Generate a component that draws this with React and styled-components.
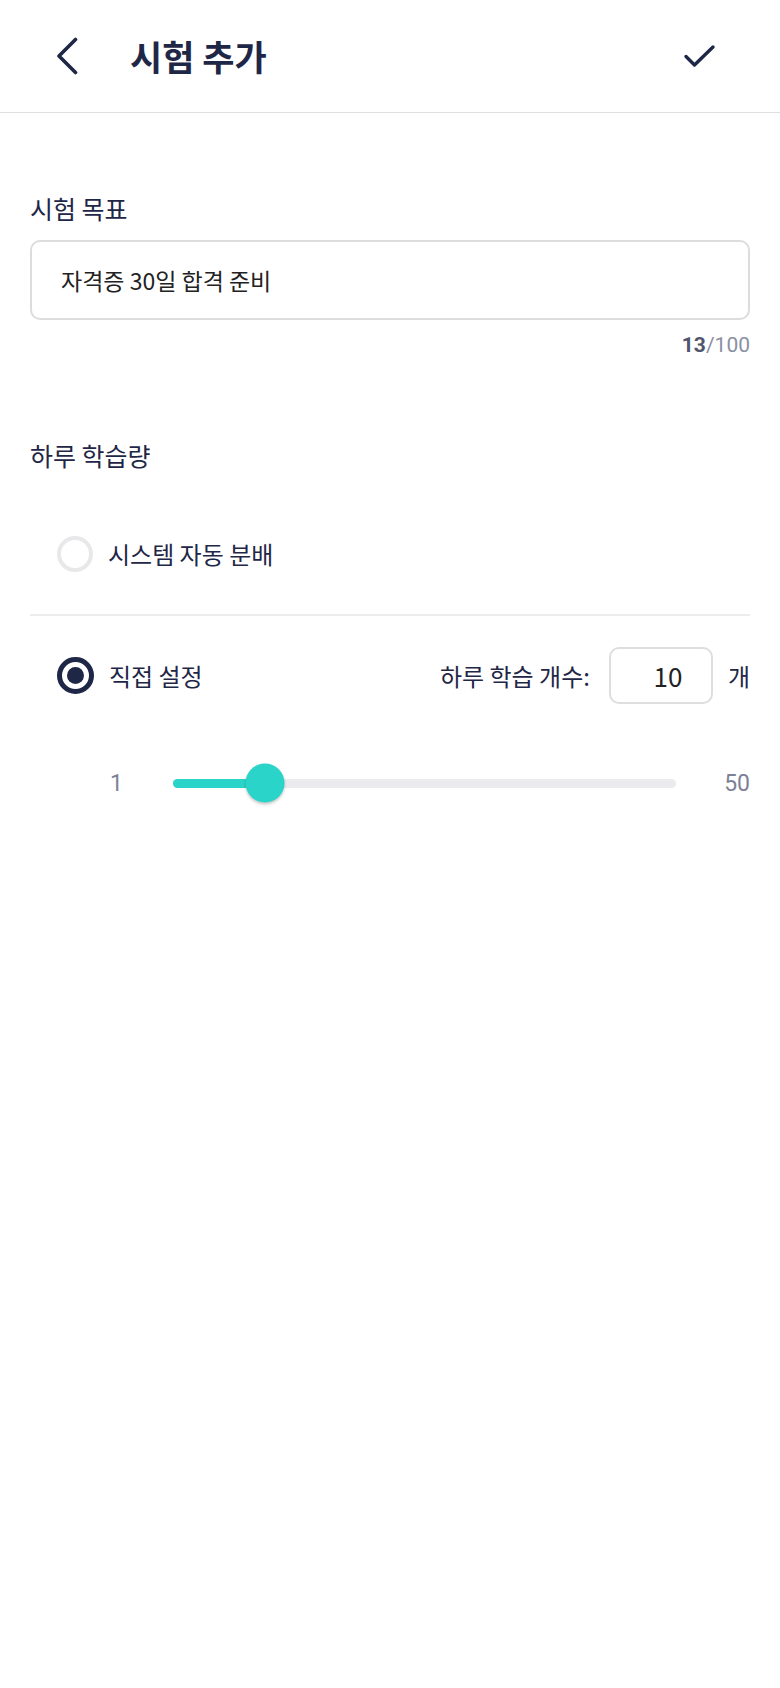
import React from "react";
import styled, { createGlobalStyle } from "styled-components";

const GlobalStyle = createGlobalStyle`
  body {
    margin: 0;
    background: #fff;
    font-family: "Noto Sans CJK KR", "Noto Sans", sans-serif;
    color: #1f2544;
  }
`;

const navy = "#1f2747";
const teal = "#2ad4c8";

const Page = styled.div`
  width: 780px;
  min-height: 1688px;
  background: #fff;
`;

const Header = styled.header`
  height: 112px;
  display: flex;
  align-items: center;
  padding: 0 64px 0 55px;
  border-bottom: 1px solid #e0e0e4;
`;

const IconButton = styled.button`
  background: none;
  border: none;
  padding: 0;
  display: flex;
  align-items: center;
  cursor: pointer;
`;

const Title = styled.h1`
  flex: 1;
  margin: 0 0 0 51px;
  font-size: 35px;
  font-weight: 700;
  color: ${navy};
  line-height: 40px;
`;

const Content = styled.main`
  padding: 0 30px;
`;

const SectionLabel = styled.div`
  margin-top: ${({ $top }) => $top}px;
  font-size: 25px;
  line-height: 30px;
  color: ${navy};
`;

const TextBox = styled.div`
  margin-top: 17px;
  height: 80px;
  box-sizing: border-box;
  border: 2px solid #dcdcdf;
  border-radius: 10px;
  display: flex;
  align-items: center;
  padding-left: 29px;
  font-size: 23px;
  color: #222;
`;

const Counter = styled.div`
  margin-top: 12px;
  text-align: right;
  font-family: Roboto, "Noto Sans", sans-serif;
  font-size: 21px;
  line-height: 26px;
  color: #8b8fa3;
  b {
    color: #50556b;
    font-weight: 700;
  }
`;

const OptionRow = styled.div`
  margin-top: ${({ $top }) => $top}px;
  height: ${({ $h }) => $h}px;
  display: flex;
  align-items: center;
  padding-left: 27px;
`;

const Radio = styled.span`
  box-sizing: border-box;
  width: ${({ $on }) => ($on ? 37 : 36)}px;
  height: ${({ $on }) => ($on ? 37 : 36)}px;
  border-radius: 50%;
  border: ${({ $on }) => ($on ? `5px solid ${navy}` : "4px solid #e8e8ea")};
  display: flex;
  align-items: center;
  justify-content: center;
  flex-shrink: 0;
  &::after {
    content: "";
    display: ${({ $on }) => ($on ? "block" : "none")};
    width: 17px;
    height: 17px;
    border-radius: 50%;
    background: ${navy};
  }
`;

const OptionText = styled.span`
  margin-left: 15px;
  font-size: 24px;
  line-height: 30px;
  color: ${navy};
`;

const Divider = styled.hr`
  margin: 30px 0 0;
  border: none;
  height: 2px;
  background: #ececee;
`;

const CountGroup = styled.div`
  margin-left: auto;
  display: flex;
  align-items: center;
  font-size: 24px;
  line-height: 30px;
  color: ${navy};
`;

const CountBox = styled.div`
  width: 104px;
  height: 57px;
  margin: 0 15px 0 19px;
  box-sizing: border-box;
  border: 2px solid #dedee1;
  border-radius: 10px;
  display: flex;
  align-items: center;
  justify-content: center;
  padding-left: 14px;
  font-size: 26px;
  color: #222;
`;

const SliderRow = styled.div`
  margin-top: 59px;
  height: 40px;
  display: flex;
  align-items: center;
  padding-left: 80px;
  font-family: Roboto, "Noto Sans", sans-serif;
  font-size: 23px;
  color: #7d8197;
`;

const Track = styled.div`
  position: relative;
  flex: 1;
  height: 9px;
  border-radius: 5px;
  background: #ebebed;
  margin: 0 ${({ $right }) => $right}px 0 ${({ $left }) => $left}px;
`;

const Fill = styled.div`
  height: 100%;
  border-radius: 5px;
  background: ${teal};
`;

const Thumb = styled.div`
  position: absolute;
  top: 50%;
  width: 39px;
  height: 39px;
  border-radius: 50%;
  background: ${teal};
  transform: translate(-50%, -50%);
  box-shadow: 0 2px 3px rgba(0, 0, 0, 0.22);
`;

const BackIcon = () => (
  <svg width="24" height="38" viewBox="0 0 24 38" fill="none">
    <path d="M20.5 2.5 L4 19 L20.5 35.5" stroke={navy} strokeWidth="3.6" strokeLinecap="round" strokeLinejoin="round" />
  </svg>
);

const CheckIcon = () => (
  <svg width="33" height="25" viewBox="0 0 33 25" fill="none">
    <path d="M3 12.5 L11.5 21 L30 3" stroke={navy} strokeWidth="3.4" strokeLinecap="round" strokeLinejoin="round" />
  </svg>
);

export default function App() {
  const min = 1;
  const max = 50;
  const value = 10;
  const pct = ((value - min) / (max - min)) * 100;

  return (
    <Page>
      <GlobalStyle />
      <Header>
        <IconButton aria-label="back">
          <BackIcon />
        </IconButton>
        <Title>시험 추가</Title>
        <IconButton aria-label="done">
          <CheckIcon />
        </IconButton>
      </Header>
      <Content>
        <SectionLabel $top={80}>시험 목표</SectionLabel>
        <TextBox>자격증 30일 합격 준비</TextBox>
        <Counter>
          <b>13</b>/100
        </Counter>

        <SectionLabel $top={82}>하루 학습량</SectionLabel>
        <OptionRow $top={54} $h={60}>
          <Radio />
          <OptionText>시스템 자동 분배</OptionText>
        </OptionRow>
        <Divider />
        <OptionRow $top={31} $h={57}>
          <Radio $on />
          <OptionText>직접 설정</OptionText>
          <CountGroup>
            <span>하루 학습 개수:</span>
            <CountBox>{value}</CountBox>
            <span>개</span>
          </CountGroup>
        </OptionRow>
        <SliderRow>
          <span>{min}</span>
          <Track $left={50} $right={48}>
            <Fill style={{ width: `${pct}%` }} />
            <Thumb style={{ left: `${pct}%` }} />
          </Track>
          <span>{max}</span>
        </SliderRow>
      </Content>
    </Page>
  );
}
